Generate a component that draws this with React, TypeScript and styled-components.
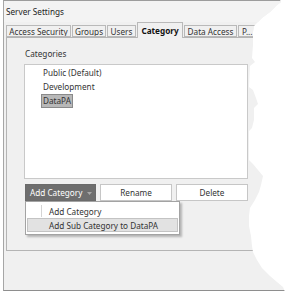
import React from 'react';
import styled, { createGlobalStyle } from 'styled-components';

const GlobalStyle = createGlobalStyle`
  html, body {
    margin: 0;
    padding: 0;
    background: #ffffff;
  }
  body {
    font-family: "Noto Sans", "Open Sans", sans-serif;
    font-size: 8.2px;
    color: #1e1e1e;
  }
`;

// torn right edge of the screenshot, in page coords
const TEAR: [number, number][] = [
  [0, 0], [280, 0], [281, 2], [276, 6], [270, 12], [262, 18], [258, 22], [254, 26],
  [253, 32], [253, 45], [252, 58], [255, 62], [250, 66], [249, 87], [253, 90],
  [256, 98], [258, 104], [254, 108], [254, 120], [252, 128], [249, 131], [249, 160],
  [253, 164], [258, 170], [263, 176], [261, 185], [259, 192], [255, 200], [250, 208],
  [249, 216], [249, 226], [251, 236], [252, 246], [253, 252], [257, 260], [262, 268],
  [270, 276], [277, 282], [283, 287], [285, 292], [0, 292],
];
const tearPath = `polygon(${TEAR.map(([x, y]) => `${x - 3}px ${y}px`).join(', ')})`;

const Page = styled.div`
  width: 285px;
  height: 292px;
  overflow: hidden;
`;

const Window = styled.div`
  margin-left: 3px;
  width: 282px;
  height: 291px;
  box-sizing: border-box;
  background: #f0f0f0;
  border-top: 1px solid #9c9c9c;
  border-left: 1px solid #a6a6a6;
  border-bottom: 1px solid #8e8e8e;
  clip-path: ${tearPath};
  display: flex;
  flex-direction: column;
`;

const TitleBar = styled.div`
  height: 21px;
  line-height: 22px;
  padding-left: 2px;
  color: #222;
  background: #f3f3f3;
`;

const TabStrip = styled.div`
  height: 15px;
  display: flex;
  align-items: flex-end;
  margin-left: 2px;
  white-space: nowrap;
`;

const Tab = styled.div<{ $w: number; $active?: boolean; $clip?: boolean }>`
  flex: none;
  box-sizing: border-box;
  width: ${p => p.$w}px;
  height: ${p => (p.$active ? 16 : 12)}px;
  margin-right: 1px;
  margin-bottom: ${p => (p.$active ? -1 : 0)}px;
  border: 1px solid #b9b9b9;
  border-bottom: ${p => (p.$active ? 'none' : '1px solid #b9b9b9')};
  background: #f0f0f0;
  position: relative;
  z-index: ${p => (p.$active ? 2 : 0)};
  font-weight: ${p => (p.$active ? 700 : 400)};
  color: ${p => (p.$active ? '#111' : '#333')};
  display: flex;
  align-items: center;
  justify-content: ${p => (p.$clip ? 'flex-start' : 'center')};
  padding: ${p => (p.$active ? '0 0 1px' : p.$clip ? '0 0 0 3px' : '0')};
  overflow: hidden;
`;

const Panel = styled.div`
  position: relative;
  z-index: 1;
  margin-left: 2px;
  width: 270px;
  height: 214px;
  box-sizing: border-box;
  border: 1px solid #b4b4b4;
  padding: 0 0 0 17px;
`;

const Label = styled.div`
  margin: 10px 0 0 1px;
  line-height: 12px;
  color: #333;
`;

const ListBox = styled.div`
  margin-top: 4px;
  width: 224px;
  height: 115px;
  box-sizing: border-box;
  border: 1px solid #c9c9c9;
  background: #ffffff;
  padding-top: 1px;
  display: flex;
  flex-direction: column;
  align-items: flex-start;
`;

const Item = styled.div<{ $selected?: boolean }>`
  height: 14px;
  line-height: 14px;
  margin-left: 16px;
  padding: 0 2px;
  box-sizing: border-box;
  color: #333;
  background: ${p => (p.$selected ? '#b8b8b8' : 'transparent')};
  outline: ${p => (p.$selected ? '1px solid #8a8a8a' : 'none')};
  outline-offset: -1px;
`;

const ButtonRow = styled.div`
  position: relative;
  margin: 5px 0 0 1px;
  display: grid;
  grid-template-columns: 71px 72px 72px;
  gap: 4px;
  height: 17px;
`;

const Button = styled.div<{ $dark?: boolean }>`
  box-sizing: border-box;
  height: 17px;
  border: 1px solid ${p => (p.$dark ? '#6b6b6b' : '#c6c6c6')};
  background: ${p => (p.$dark ? '#6e6e6e' : '#ffffff')};
  color: ${p => (p.$dark ? '#ffffff' : '#333')};
  display: flex;
  align-items: center;
  justify-content: ${p => (p.$dark ? 'flex-start' : 'center')};
  padding: ${p => (p.$dark ? '0 0 0 4px' : '0')};
  position: relative;
`;

const Caret = styled.svg`
  position: absolute;
  right: 3px;
  top: 7px;
`;

const Menu = styled.div`
  position: absolute;
  left: 0;
  top: 17px;
  width: 155px;
  box-sizing: border-box;
  border: 1px solid #a3a3a3;
  background: #ffffff;
  padding: 2px 1px;
  box-shadow: 2px 2px 2px rgba(0, 0, 0, 0.25);
  z-index: 3;
`;

const MenuRow = styled.div<{ $hot?: boolean }>`
  height: 14px;
  box-sizing: border-box;
  display: flex;
  align-items: center;
  background: ${p => (p.$hot ? '#e2e2e2' : 'transparent')};
  border: 1px solid ${p => (p.$hot ? '#c3c3c3' : 'transparent')};
  color: #333;
`;

const IconCell = styled.div<{ $hot?: boolean }>`
  width: 13px;
  height: 100%;
  border-right: 1px solid ${p => (p.$hot ? 'transparent' : '#d4d4d4')};
  margin-right: 7px;
`;

const tabs = [
  { name: 'Access Security', w: 65 },
  { name: 'Groups', w: 34 },
  { name: 'Users', w: 29 },
  { name: 'Category', w: 46, active: true },
  { name: 'Data Access', w: 53 },
  { name: 'P...', w: 40, clip: true },
];

export default function App() {
  return (
    <>
      <GlobalStyle />
      <Page>
        <Window>
          <TitleBar>Server Settings</TitleBar>
          <TabStrip>
            {tabs.map(t => (
              <Tab key={t.name} $w={t.w} $active={t.active} $clip={t.clip}>{t.name}</Tab>
            ))}
          </TabStrip>
          <Panel>
            <Label>Categories</Label>
            <ListBox>
              <Item>Public (Default)</Item>
              <Item>Development</Item>
              <Item $selected>DataPA</Item>
            </ListBox>
            <ButtonRow>
              <Button $dark>
                Add Category
                <Caret width="5" height="3" viewBox="0 0 5 3">
                  <path d="M0 0 L5 0 L2.5 3 Z" fill="#a8a8a8" />
                </Caret>
              </Button>
              <Button>Rename</Button>
              <Button>Delete</Button>
              <Menu>
                <MenuRow>
                  <IconCell />
                  Add Category
                </MenuRow>
                <MenuRow $hot>
                  <IconCell $hot />
                  Add Sub Category to DataPA
                </MenuRow>
              </Menu>
            </ButtonRow>
          </Panel>
        </Window>
      </Page>
    </>
  );
}
